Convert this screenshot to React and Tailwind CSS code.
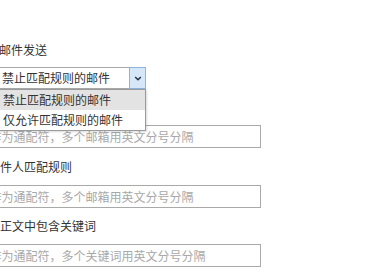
import React from "react";

const font = { fontFamily: '"Noto Sans CJK SC", "Microsoft YaHei", sans-serif' };

function Chevron(p) {
  return (
    <svg viewBox="0 0 10 8" fill="none" {...p}>
      <path d="M1.5 2 L5 5.5 L8.5 2" stroke="currentColor" strokeWidth="1.8" />
    </svg>
  );
}

function TextField({ placeholder }) {
  return (
    <div className="-ml-[37px] w-[298px] h-[23px] border border-[#a9a9a9] bg-white px-[8px] flex items-center">
      <span className="text-[12px] text-[#a8a8a8] whitespace-nowrap leading-none">{placeholder}</span>
    </div>
  );
}

export default function App() {
  return (
    <div className="w-[372px] h-[279px] overflow-hidden bg-white text-[#333]" style={font}>
      <div className="pt-[42px] flex flex-col">
        {/* sending rule */}
        <div className="-ml-px text-[12px] leading-[16px] whitespace-nowrap">邮件发送</div>

        <div className="relative mt-[9px] -ml-[10px] w-[156px] h-[22px] border border-[#a9a9a9] bg-white flex items-center">
          <span className="pl-[11px] text-[12px] whitespace-nowrap flex-1">禁止匹配规则的邮件</span>
          <div className="w-[17px] h-[22px] -mr-px -mt-px -mb-px self-start border border-[#8cb4de] bg-[#d6e7f8] flex items-center justify-center text-[#1f2f47]">
            <Chevron className="w-[8px] h-[7px]" />
          </div>

          {/* open list */}
          <div className="absolute left-[-1px] top-[21px] w-[156px] border border-[#9a9a9a] bg-white shadow-[1px_1px_2px_rgba(0,0,0,0.15)] z-10 flex flex-col">
            <div className="h-[20px] bg-[#e3e3e3] pl-[12px] flex items-center text-[12px] whitespace-nowrap">禁止匹配规则的邮件</div>
            <div className="h-[20px] pl-[12px] flex items-center text-[12px] whitespace-nowrap">仅允许匹配规则的邮件</div>
          </div>
        </div>

        <div className="mt-[36px]">
          <TextField placeholder="以*作为通配符，多个邮箱用英文分号分隔" />
        </div>

        {/* sender rule */}
        <div className="mt-[11px] text-[12px] leading-[16px] whitespace-nowrap">件人匹配规则</div>
        <div className="mt-[10px]">
          <TextField placeholder="以*作为通配符，多个邮箱用英文分号分隔" />
        </div>

        {/* body keywords */}
        <div className="mt-[10px] text-[12px] leading-[16px] whitespace-nowrap">正文中包含关键词</div>
        <div className="mt-[10px]">
          <TextField placeholder="以*作为通配符，多个关键词用英文分号分隔" />
        </div>
      </div>
    </div>
  );
}
